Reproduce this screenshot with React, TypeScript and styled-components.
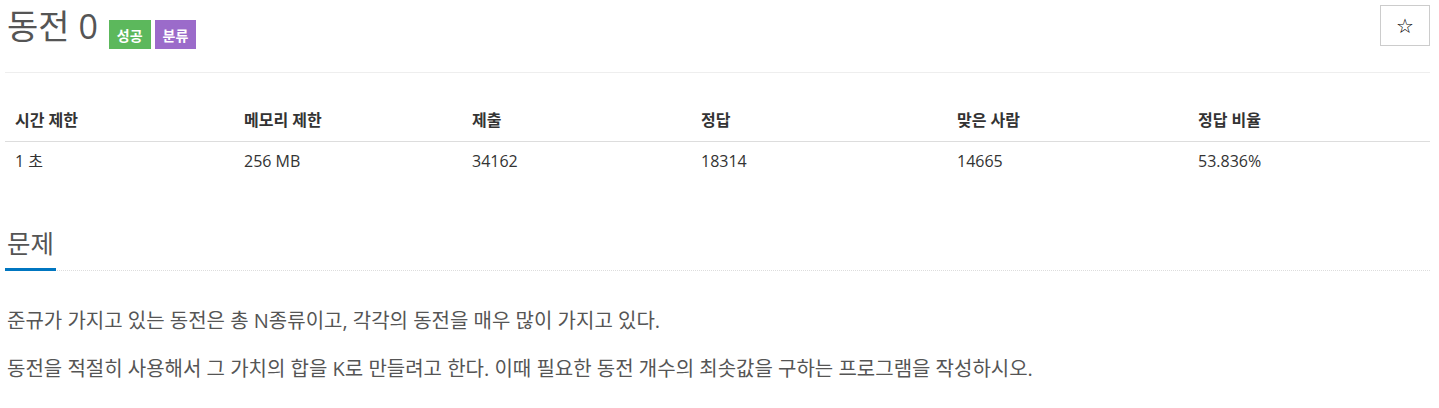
import React from "react";
import styled, { createGlobalStyle } from "styled-components";

const Global = createGlobalStyle`
  html, body { margin: 0; padding: 0; background: #fff; }
  body {
    font-family: "Open Sans", "Noto Sans CJK KR", sans-serif;
    color: #333;
    font-size: 14px;
  }
`;

const Page = styled.div`
  padding: 5px 9px 0 5px;
`;

const Header = styled.div`
  display: flex;
  justify-content: space-between;
  align-items: flex-start;
  padding-bottom: 23px;
  border-bottom: 1px solid #eee;
`;

const TitleRow = styled.div`
  display: flex;
  align-items: flex-start;
  padding-left: 2px;
`;

const Title = styled.h1`
  margin: 2px 0 0;
  font-size: 34px;
  line-height: 38px;
  font-weight: 400;
  color: #555;
`;

const Badge = styled.span<{ $bg: string }>`
  display: inline-flex;
  align-items: center;
  justify-content: center;
  height: 29px;
  padding: 0 8px;
  margin: 15px 0 0 4px;
  background: ${(p) => p.$bg};
  color: #fff;
  font-size: 14px;
  font-weight: 700;
  &:first-of-type { margin-left: 11px; }
`;

const StarButton = styled.button`
  width: 50px;
  height: 41px;
  border: 1px solid #ccc;
  background: #fff;
  color: #000;
  font-family: "DejaVu Sans", sans-serif;
  font-size: 20px;
  font-weight: 700;
  line-height: 1;
  padding: 0;
  cursor: pointer;
`;

const Table = styled.table`
  width: 100%;
  margin-top: 29px;
  border-collapse: collapse;
  table-layout: fixed;
`;

const Th = styled.th`
  text-align: left;
  font-weight: 700;
  font-size: 16px;
  line-height: 22px;
  padding: 7px 10px 10px;
  color: #333;
  border-bottom: 1px solid #ddd;
`;

const Td = styled.td`
  font-size: 16px;
  line-height: 22px;
  padding: 8px 10px;
  color: #333;
`;

const Section = styled.section`
  margin-top: 45px;
`;

const Headline = styled.div`
  display: flex;
  border-bottom: 1px dotted #ddd;
`;

const HeadlineText = styled.h2`
  margin: 0 0 -1px;
  padding: 0 2px 7px;
  font-size: 25.5px;
  line-height: 36px;
  font-weight: 400;
  color: #555;
  border-bottom: 3px solid #0076c0;
`;

const Body = styled.div`
  padding: 35px 2px 0;
`;

const P = styled.p`
  margin: 0 0 18px;
  font-size: 20px;
  line-height: 30px;
  color: #555;
`;

const cols = [229, 228, 229, 256, 241];
const heads = ["시간 제한", "메모리 제한", "제출", "정답", "맞은 사람", "정답 비율"];
const vals = ["1 초", "256 MB", "34162", "18314", "14665", "53.836%"];

export default function App() {
  return (
    <>
      <Global />
      <Page>
        <Header>
          <TitleRow>
            <Title>동전 0</Title>
            <Badge $bg="#5cb85c">성공</Badge>
            <Badge $bg="#9b6bca">분류</Badge>
          </TitleRow>
          <StarButton aria-label="즐겨찾기">☆</StarButton>
        </Header>
        <Table>
          <colgroup>
            {cols.map((w, i) => (
              <col key={i} style={{ width: w }} />
            ))}
            <col />
          </colgroup>
          <thead>
            <tr>
              {heads.map((h) => (
                <Th key={h}>{h}</Th>
              ))}
            </tr>
          </thead>
          <tbody>
            <tr>
              {vals.map((v) => (
                <Td key={v}>{v}</Td>
              ))}
            </tr>
          </tbody>
        </Table>
        <Section>
          <Headline>
            <HeadlineText>문제</HeadlineText>
          </Headline>
          <Body>
            <P>준규가 가지고 있는 동전은 총 N종류이고, 각각의 동전을 매우 많이 가지고 있다.</P>
            <P>동전을 적절히 사용해서 그 가치의 합을 K로 만들려고 한다. 이때 필요한 동전 개수의 최솟값을 구하는 프로그램을 작성하시오.</P>
          </Body>
        </Section>
      </Page>
    </>
  );
}
